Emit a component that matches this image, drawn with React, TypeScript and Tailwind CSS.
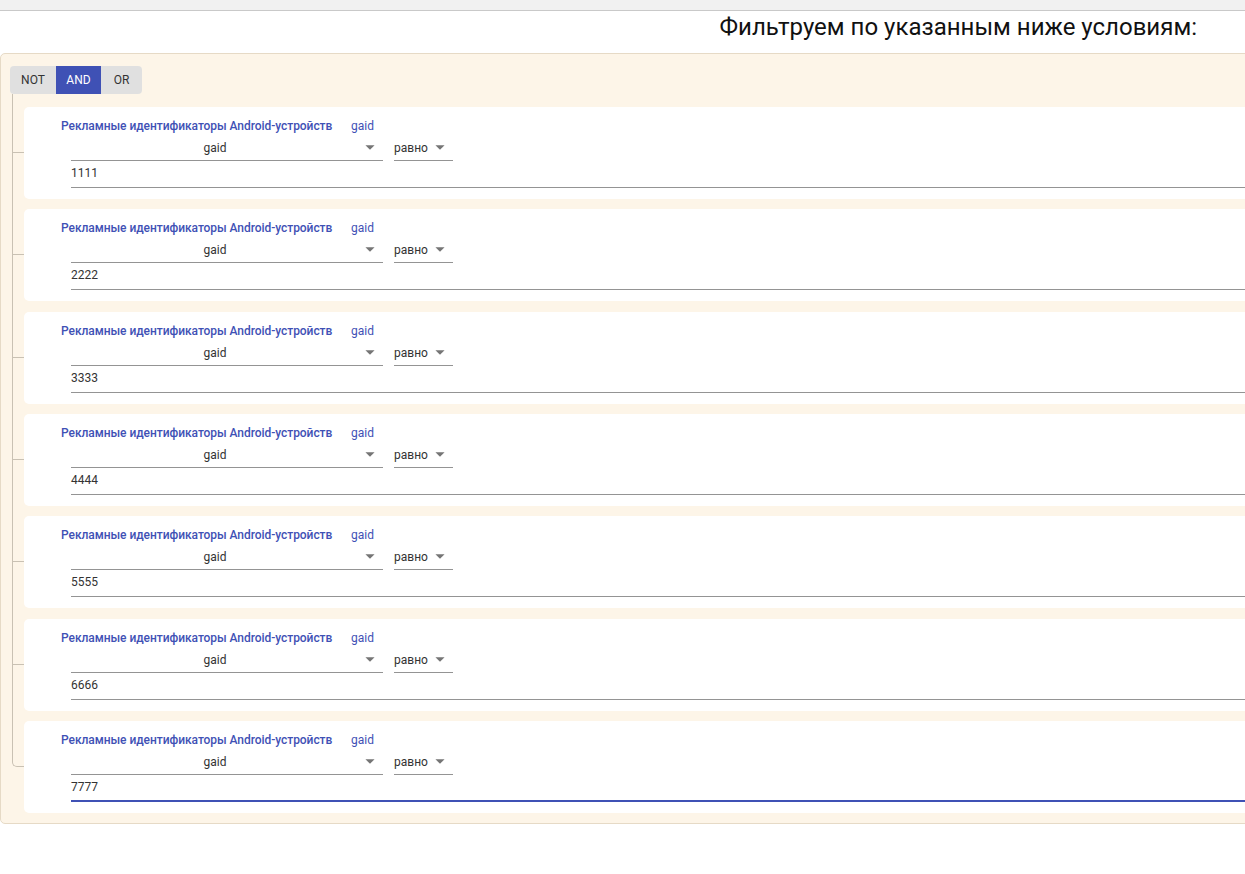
import { Fragment } from "react";

const rules = ["1111", "2222", "3333", "4444", "5555", "6666", "7777"];

function DropArrow() {
  return (
    <svg viewBox="0 0 24 24" className="w-[22px] h-[22px] text-[#757575]" fill="currentColor">
      <path d="M7 10l5 5 5-5z" />
    </svg>
  );
}

function RuleCard({ value, last }: { value: string; last: boolean }) {
  return (
    <div className="h-[92px] bg-white rounded-[5px] pl-[37px] pt-[12px]">
      <div className="flex items-center h-[14px] text-[12px] leading-[14px] text-[#3f51b5]">
        <span className="font-medium w-[290px] tracking-[-0.05px]">Рекламные идентификаторы Android-устройств</span>
        <span>gaid</span>
      </div>
      <div className="flex items-start gap-[11px] pl-[10px]">
        <div className="relative w-[312px] h-[28px] border-b border-[#949494] flex items-end pb-[5px] pr-[24px]">
          <span className="flex-1 text-center text-[12px] leading-[14px] text-[#333]">gaid</span>
          <span className="absolute right-[2px] bottom-[2px]">
            <DropArrow />
          </span>
        </div>
        <div className="relative w-[59px] h-[28px] border-b border-[#949494] flex items-end pb-[5px]">
          <span className="text-[12px] leading-[14px] text-[#333]">равно</span>
          <span className="absolute right-[2px] bottom-[2px]">
            <DropArrow />
          </span>
        </div>
      </div>
      <div className="pl-[10px]">
        <div
          className={
            last
              ? "h-[27px] border-b-2 border-[#3f51b5] flex items-end pb-[6px] text-[12px] leading-[14px] text-[#333]"
              : "h-[27px] border-b border-[#949494] flex items-end pb-[7px] text-[12px] leading-[14px] text-[#333]"
          }
        >
          {value}
        </div>
      </div>
    </div>
  );
}

export default function App() {
  return (
    <div className="min-h-screen bg-white overflow-hidden font-['Roboto',sans-serif]">
      <div className="h-[11px] bg-[#f1f1f1] border-b border-[#c9c9c9]"></div>

      <div className="h-[42px] flex justify-end pr-[48px] pt-[2px]">
        <h1 className="text-[24px] leading-[29px] text-[#111] font-normal">
          Фильтруем по указанным ниже условиям:
        </h1>
      </div>

      <section className="mr-[-40px] bg-[#fdf5e8] border border-[#e6dac6] rounded-l-[5px] pl-[9px] pt-[12px] pb-[10px]">
        <div className="flex">
          <div className="flex h-[28px] rounded-[4px] overflow-hidden bg-[#e0e0e0] text-[12px]">
            <button className="w-[46px] text-[#333]">NOT</button>
            <button className="w-[45px] bg-[#3f51b5] text-white">AND</button>
            <button className="w-[41px] text-[#333]">OR</button>
          </div>
        </div>

        <div className="ml-[2px] pt-[13px] flex flex-col gap-[10.33px]">
          {rules.map((v, i) => {
            const last = i === rules.length - 1;
            return (
              <Fragment key={v}>
                <div className="relative pl-[12px]">
                  <span
                    className={
                      (i === 0 ? "top-[-13px] h-[calc(50%+13px)] " : "top-[-11px] h-[calc(50%+11px)] ") +
                      (last ? "rounded-bl-[5px] " : "") +
                      "absolute left-0 w-[12px] border-l border-b border-[#c9c1b3]"
                    }
                  ></span>
                  {!last && (
                    <span className="absolute left-0 top-1/2 bottom-0 border-l border-[#c9c1b3]"></span>
                  )}
                  <RuleCard value={v} last={last} />
                </div>
              </Fragment>
            );
          })}
        </div>
      </section>
    </div>
  );
}
